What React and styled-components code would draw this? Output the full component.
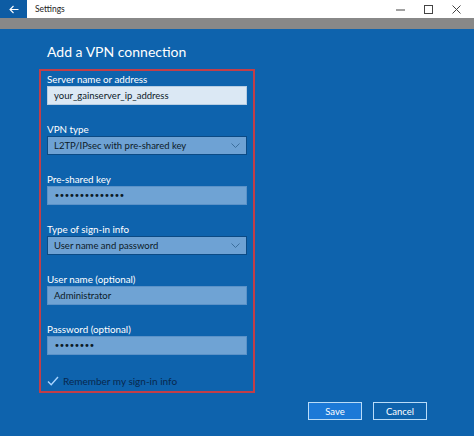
import React from 'react';
import styled, {createGlobalStyle} from 'styled-components';

const GlobalStyle = createGlobalStyle`
  html, body {
    margin: 0;
    padding: 0;
    background: #0e63ad;
  }
  body {
    font-family: Lato, 'Open Sans', sans-serif;
  }
`;

const fields = [
  {label: 'Server name or address', value: 'your_gainserver_ip_address', kind: 'focus'},
  {label: 'VPN type', value: 'L2TP/IPsec with pre-shared key', kind: 'select'},
  {label: 'Pre-shared key', value: '••••••••••••••', kind: 'secret'},
  {label: 'Type of sign-in info', value: 'User name and password', kind: 'select'},
  {label: 'User name (optional)', value: 'Administrator', kind: 'text'},
  {label: 'Password (optional)', value: '••••••••', kind: 'secret'}
];

export default function App() {
  return (
    <Window>
      <GlobalStyle />
      <TitleBar>
        <BackButton>
          <svg width="10" height="9" viewBox="0 0 10 9">
            <path d="M9.5 4.5H1M4.5 1L1 4.5 4.5 8" fill="none" stroke="#fff" strokeWidth="1.1" />
          </svg>
        </BackButton>
        <AppName>Settings</AppName>
        <Controls>
          <Control>
            <svg width="9" height="9" viewBox="0 0 9 9">
              <path d="M0 5h9" stroke="#444" strokeWidth="1" />
            </svg>
          </Control>
          <Control>
            <svg width="9" height="9" viewBox="0 0 9 9">
              <rect x="0.5" y="0.5" width="8" height="8" fill="none" stroke="#444" strokeWidth="1" />
            </svg>
          </Control>
          <Control>
            <svg width="9" height="9" viewBox="0 0 9 9">
              <path d="M0.5 0.5l8 8M8.5 0.5l-8 8" stroke="#444" strokeWidth="1" />
            </svg>
          </Control>
        </Controls>
      </TitleBar>
      <Content>
        <Heading>Add a VPN connection</Heading>
        <Highlight>
          {fields.map(f => (
            <Field key={f.label}>
              <Label>{f.label}</Label>
              <Input $kind={f.kind}>
                <Value $secret={f.kind === 'secret'}>{f.value}</Value>
                {f.kind === 'select' && (
                  <svg width="9" height="5" viewBox="0 0 9 5">
                    <path d="M0.5 0.5l4 4 4-4" fill="none" stroke="#3d6f9c" strokeWidth="1" />
                  </svg>
                )}
              </Input>
            </Field>
          ))}
          <CheckRow>
            <CheckBox>
              <svg width="12" height="10" viewBox="0 0 12 10">
                <path d="M1 5.5l3.2 3.2L11 1" fill="none" stroke="#a9d4ff" strokeWidth="1.4" />
              </svg>
            </CheckBox>
            <CheckText>Remember my sign-in info</CheckText>
          </CheckRow>
        </Highlight>
        <Actions>
          <Button $primary>Save</Button>
          <Button>Cancel</Button>
        </Actions>
      </Content>
    </Window>
  );
}

const Window = styled.div`
  width: 474px;
  height: 436px;
  background: #0e63ad;
  overflow: hidden;
`;

/* the window's title bar, with the grey shadow band under it */
const TitleBar = styled.div`
  display: flex;
  align-items: flex-start;
  height: 18px;
  background: #fff;
  border-bottom: 11px solid #888888;
`;

const BackButton = styled.div`
  width: 27px;
  height: 18px;
  background: #0d5ca4;
  display: flex;
  align-items: center;
  justify-content: center;
`;

const AppName = styled.div`
  flex: 1;
  margin-left: 8px;
  font-size: 8.5px;
  line-height: 18px;
  color: #222;
`;

const Controls = styled.div`
  display: flex;
  margin-right: 4px;
`;

const Control = styled.div`
  width: 28px;
  height: 18px;
  display: flex;
  align-items: center;
  justify-content: center;
`;

const Content = styled.div`
  padding-left: 39px;
  padding-top: 13px;
`;

const Heading = styled.h1`
  margin: 0 0 8px 8px;
  font-size: 14px;
  line-height: 19px;
  font-weight: 400;
  color: #fff;
`;

const Highlight = styled.div`
  width: 200px;
  border: 2px solid #c23e48;
  padding: 1px 6px 1px 6px;
  display: flex;
  flex-direction: column;
  gap: 17px;
`;

const Field = styled.div`
  display: flex;
  flex-direction: column;
`;

const Label = styled.div`
  font-size: 9.8px;
  line-height: 14px;
  color: #fff;
`;

const inputColors = {
  focus: {bg: '#dbe8f4', border: '#b7cde2'},
  select: {bg: '#6ea2d4', border: '#0b4a84'},
  secret: {bg: '#6fa3d4', border: '#5b92c8'},
  text: {bg: '#6fa3d4', border: '#5b92c8'}
};

const Input = styled.div`
  box-sizing: border-box;
  height: 19px;
  display: flex;
  align-items: center;
  justify-content: space-between;
  padding: 0 6px 0 6px;
  background: ${p => inputColors[p.$kind].bg};
  border: 1px solid ${p => inputColors[p.$kind].border};
`;

const Value = styled.span`
  font-family: ${p => (p.$secret ? "'DejaVu Sans', sans-serif" : 'inherit')};
  font-size: ${p => (p.$secret ? '10px' : '9.5px')};
  letter-spacing: ${p => (p.$secret ? '-0.9px' : '0')};
  color: #0c1a28;
`;

const CheckRow = styled.div`
  display: flex;
  align-items: center;
  gap: 4px;
  height: 16px;
  margin-top: 1px;
  margin-bottom: 1px;
`;

const CheckBox = styled.div`
  width: 12px;
  height: 12px;
  display: flex;
  align-items: center;
  justify-content: center;
`;

const CheckText = styled.div`
  font-size: 10px;
  color: #08284d;
`;

const Actions = styled.div`
  display: flex;
  gap: 11px;
  margin: 9px 0 0 269px;
`;

const Button = styled.div`
  box-sizing: border-box;
  width: 54px;
  height: 18px;
  display: flex;
  align-items: center;
  justify-content: center;
  font-size: 9.5px;
  color: #fff;
  background: ${p => (p.$primary ? '#1b79d7' : '#0e63ad')};
  border: 1.5px solid #b9dcf8;
`;
